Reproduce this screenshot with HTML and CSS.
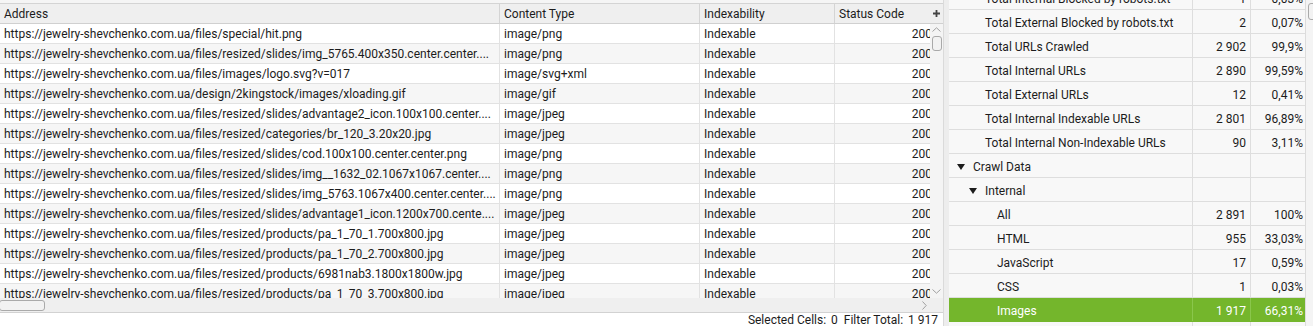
FILE: index.html
```html
<!DOCTYPE html>
<html lang="en">
<head>
  <meta charset="UTF-8">
  <title>Crawl Overview - Images</title>
  <link rel="stylesheet" href="styles.css">
</head>
<body>

<div class="app">

  <!-- Left: URL grid -->
  <section class="left">
    <div class="topline"></div>

    <div class="head">
      <div class="head-main">
        <div class="c w-addr">Address</div>
        <div class="c w-type">Content Type</div>
        <div class="c w-idx">Indexability</div>
        <div class="c w-code">Status Code</div>
      </div>
      <div class="plus">
        <svg width="7" height="7" viewBox="0 0 7 7"><path d="M3.5 0v7M0 3.5h7" stroke="#444" stroke-width="1.8"/></svg>
      </div>
    </div>

    <div class="body">
      <div class="rows">
        <div class="row"><div class="c w-addr">https://jewelry-shevchenko.com.ua/files/special/hit.png</div><div class="c w-type">image/png</div><div class="c w-idx">Indexable</div><div class="c w-code num">200</div></div>
        <div class="row"><div class="c w-addr">https://jewelry-shevchenko.com.ua/files/resized/slides/img_5765.400x350.center.center....</div><div class="c w-type">image/png</div><div class="c w-idx">Indexable</div><div class="c w-code num">200</div></div>
        <div class="row"><div class="c w-addr">https://jewelry-shevchenko.com.ua/files/images/logo.svg?v=017</div><div class="c w-type">image/svg+xml</div><div class="c w-idx">Indexable</div><div class="c w-code num">200</div></div>
        <div class="row"><div class="c w-addr">https://jewelry-shevchenko.com.ua/design/2kingstock/images/xloading.gif</div><div class="c w-type">image/gif</div><div class="c w-idx">Indexable</div><div class="c w-code num">200</div></div>
        <div class="row"><div class="c w-addr">https://jewelry-shevchenko.com.ua/files/resized/slides/advantage2_icon.100x100.center....</div><div class="c w-type">image/jpeg</div><div class="c w-idx">Indexable</div><div class="c w-code num">200</div></div>
        <div class="row"><div class="c w-addr">https://jewelry-shevchenko.com.ua/files/resized/categories/br_120_3.20x20.jpg</div><div class="c w-type">image/jpeg</div><div class="c w-idx">Indexable</div><div class="c w-code num">200</div></div>
        <div class="row"><div class="c w-addr">https://jewelry-shevchenko.com.ua/files/resized/slides/cod.100x100.center.center.png</div><div class="c w-type">image/png</div><div class="c w-idx">Indexable</div><div class="c w-code num">200</div></div>
        <div class="row"><div class="c w-addr">https://jewelry-shevchenko.com.ua/files/resized/slides/img__1632_02.1067x1067.center....</div><div class="c w-type">image/png</div><div class="c w-idx">Indexable</div><div class="c w-code num">200</div></div>
        <div class="row"><div class="c w-addr">https://jewelry-shevchenko.com.ua/files/resized/slides/img_5763.1067x400.center.center....</div><div class="c w-type">image/png</div><div class="c w-idx">Indexable</div><div class="c w-code num">200</div></div>
        <div class="row"><div class="c w-addr">https://jewelry-shevchenko.com.ua/files/resized/slides/advantage1_icon.1200x700.cente....</div><div class="c w-type">image/jpeg</div><div class="c w-idx">Indexable</div><div class="c w-code num">200</div></div>
        <div class="row"><div class="c w-addr">https://jewelry-shevchenko.com.ua/files/resized/products/pa_1_70_1.700x800.jpg</div><div class="c w-type">image/jpeg</div><div class="c w-idx">Indexable</div><div class="c w-code num">200</div></div>
        <div class="row"><div class="c w-addr">https://jewelry-shevchenko.com.ua/files/resized/products/pa_1_70_2.700x800.jpg</div><div class="c w-type">image/jpeg</div><div class="c w-idx">Indexable</div><div class="c w-code num">200</div></div>
        <div class="row"><div class="c w-addr">https://jewelry-shevchenko.com.ua/files/resized/products/6981nab3.1800x1800w.jpg</div><div class="c w-type">image/jpeg</div><div class="c w-idx">Indexable</div><div class="c w-code num">200</div></div>
        <div class="row"><div class="c w-addr">https://jewelry-shevchenko.com.ua/files/resized/products/pa_1_70_3.700x800.jpg</div><div class="c w-type">image/jpeg</div><div class="c w-idx">Indexable</div><div class="c w-code num">200</div></div>
      </div>

      <div class="vscroll">
        <svg class="arrow-up" width="9" height="5" viewBox="0 0 9 5"><path d="M0.5 4.5L4.5 0.8L8.5 4.5" fill="none" stroke="#a0a0a0"/></svg>
        <div class="vthumb"></div>
        <div class="spacer"></div>
        <svg class="arrow-down" width="9" height="5" viewBox="0 0 9 5"><path d="M0.5 0.5L4.5 4.2L8.5 0.5" fill="none" stroke="#a0a0a0"/></svg>
      </div>
    </div>

    <div class="hscroll">
      <div class="hthumb"></div>
      <svg class="arrow-right" width="5" height="9" viewBox="0 0 5 9"><path d="M0.5 0.5L4.2 4.5L0.5 8.5" fill="none" stroke="#a0a0a0"/></svg>
    </div>

    <div class="status">
      Selected Cells: <span class="val">0</span> <span class="gap">Filter Total:</span> <span class="val">1 917</span>
    </div>
  </section>

  <div class="splitter"></div>

  <!-- Right: overview tree -->
  <section class="right">
    <div class="tree">
      <div class="tree-inner">
        <div class="trow"><div class="tc-label lvl1"><span class="twisty"></span>Total Internal Blocked by robots.txt</div><div class="tc-num">1</div><div class="tc-pct">0,03%</div></div>
        <div class="trow"><div class="tc-label lvl1"><span class="twisty"></span>Total External Blocked by robots.txt</div><div class="tc-num">2</div><div class="tc-pct">0,07%</div></div>
        <div class="trow"><div class="tc-label lvl1"><span class="twisty"></span>Total URLs Crawled</div><div class="tc-num">2 902</div><div class="tc-pct">99,9%</div></div>
        <div class="trow"><div class="tc-label lvl1"><span class="twisty"></span>Total Internal URLs</div><div class="tc-num">2 890</div><div class="tc-pct">99,59%</div></div>
        <div class="trow"><div class="tc-label lvl1"><span class="twisty"></span>Total External URLs</div><div class="tc-num">12</div><div class="tc-pct">0,41%</div></div>
        <div class="trow"><div class="tc-label lvl1"><span class="twisty"></span>Total Internal Indexable URLs</div><div class="tc-num">2 801</div><div class="tc-pct">96,89%</div></div>
        <div class="trow"><div class="tc-label lvl1"><span class="twisty"></span>Total Internal Non-Indexable URLs</div><div class="tc-num">90</div><div class="tc-pct">3,11%</div></div>
        <div class="trow"><div class="tc-label lvl0"><span class="twisty open"></span>Crawl Data</div><div class="tc-num"></div><div class="tc-pct"></div></div>
        <div class="trow"><div class="tc-label lvl1"><span class="twisty open"></span>Internal</div><div class="tc-num"></div><div class="tc-pct"></div></div>
        <div class="trow"><div class="tc-label lvl2"><span class="twisty"></span>All</div><div class="tc-num">2 891</div><div class="tc-pct">100%</div></div>
        <div class="trow"><div class="tc-label lvl2"><span class="twisty"></span>HTML</div><div class="tc-num">955</div><div class="tc-pct">33,03%</div></div>
        <div class="trow"><div class="tc-label lvl2"><span class="twisty"></span>JavaScript</div><div class="tc-num">17</div><div class="tc-pct">0,59%</div></div>
        <div class="trow"><div class="tc-label lvl2"><span class="twisty"></span>CSS</div><div class="tc-num">1</div><div class="tc-pct">0,03%</div></div>
        <div class="trow sel"><div class="tc-label lvl2"><span class="twisty"></span>Images</div><div class="tc-num">1 917</div><div class="tc-pct">66,31%</div></div>
        <div class="trow"><div class="tc-label lvl2"><span class="twisty"></span></div><div class="tc-num"></div><div class="tc-pct"></div></div>
      </div>
    </div>
    <div class="rscroll"><div class="rthumb"></div></div>
  </section>

</div>

</body>
</html>
```

FILE: styles.css
```css
* { box-sizing: border-box; margin: 0; padding: 0; }
body { font-family: Roboto, "Liberation Sans", sans-serif; font-size: 12px; color: #1c1c1c; background: #fff; width: 1313px; height: 326px; overflow: hidden; }
.app { display: flex; height: 326px; }

/* Left grid */
.left { width: 943px; flex: none; display: flex; flex-direction: column; overflow: hidden; }
.left > * { flex: none; }
.topline { height: 4px; background: #f5f5f5; border-bottom: 1px solid #d4d4d4; }

.head { display: flex; height: 20px; background: #efefef; border-bottom: 1px solid #d0d0d0; }
.head-main { width: 930px; display: flex; overflow: hidden; }
.head .c { border-right: 1px solid #d4d4d4; }
.plus { width: 13px; display: flex; align-items: center; justify-content: center; background: #efefef; }

.c { flex: none; padding: 3px 4px 0; line-height: 15px; white-space: nowrap; overflow: hidden; }
.w-addr { width: 500px; }
.w-type { width: 200px; }
.w-idx { width: 135px; }
.w-code { width: 100px; }
.num { text-align: right; padding-right: 2px; }

.body { display: flex; height: 274px; }
.rows { width: 930px; overflow: hidden; }
.row { display: flex; height: 20px; border-bottom: 1px solid #e2e2e2; background: #fff; }
.row:nth-child(even) { background: #f6f6f6; }
.row .c { border-right: 1px solid #e2e2e2; }

.vscroll { width: 13px; background: #f4f4f4; display: flex; flex-direction: column; align-items: center; }
.arrow-up { margin-top: 3px; }
.vthumb { width: 10px; height: 15px; margin-top: 4px; border: 1px solid #a9a9a9; border-radius: 3px; background: #f2f2f2; }
.spacer { flex: 1; }
.arrow-down { margin-bottom: 4px; }

.hscroll { height: 15px; background: #efefef; border-bottom: 1px solid #d2d2d2; display: flex; align-items: center; justify-content: space-between; padding-right: 16px; }
.hthumb { width: 46px; height: 11px; border: 1px solid #aaa; border-radius: 3px; background: #f2f2f2; margin-left: -1px; }

.status { text-align: right; padding-right: 5px; line-height: 15px; white-space: nowrap; }
.status .val { margin-left: 2px; }
.status .gap { margin-left: 3px; }

.splitter { width: 6px; flex: none; background: #ededed; border-left: 1px solid #dadada; }

/* Right overview tree */
.right { flex: 1; display: flex; overflow: hidden; }
.tree { width: 356px; flex: none; overflow: hidden; background: #f8f8f8; }
.tree-inner { margin-top: -14px; }
.trow { display: flex; height: 24px; border-bottom: 1px solid #dedede; background: #f8f8f8; white-space: nowrap; }
.trow > div { padding-top: 4px; line-height: 19px; }
.tc-label { width: 244px; border-right: 1px solid #dedede; overflow: hidden; }
.tc-num { width: 58px; text-align: right; padding-right: 4px; border-right: 1px solid #dedede; }
.tc-pct { width: 54px; text-align: right; padding-right: 2px; }
.lvl0 { padding-left: 8px; }
.lvl1 { padding-left: 20px; }
.lvl2 { padding-left: 32px; }
.twisty { display: inline-block; width: 16px; height: 6px; vertical-align: 1px; position: relative; }
.twisty.open::before {
  content: ""; position: absolute; left: 0; top: 0;
  border-left: 4px solid transparent; border-right: 4px solid transparent; border-top: 6px solid #1c1c1c;
}

.trow.sel { background: #74b62c; color: #fff; border-bottom-color: #74b62c; }
.trow.sel .tc-label, .trow.sel .tc-num { border-right-color: #8ac64c; }

.rscroll { flex: 1; background: #f4f4f4; border-left: 1px solid #dcdcdc; padding: 3px 0 0 2px; }
.rthumb { width: 10px; height: 17px; border: 1px solid #aaa; border-radius: 3px; background: #f2f2f2; }
```
